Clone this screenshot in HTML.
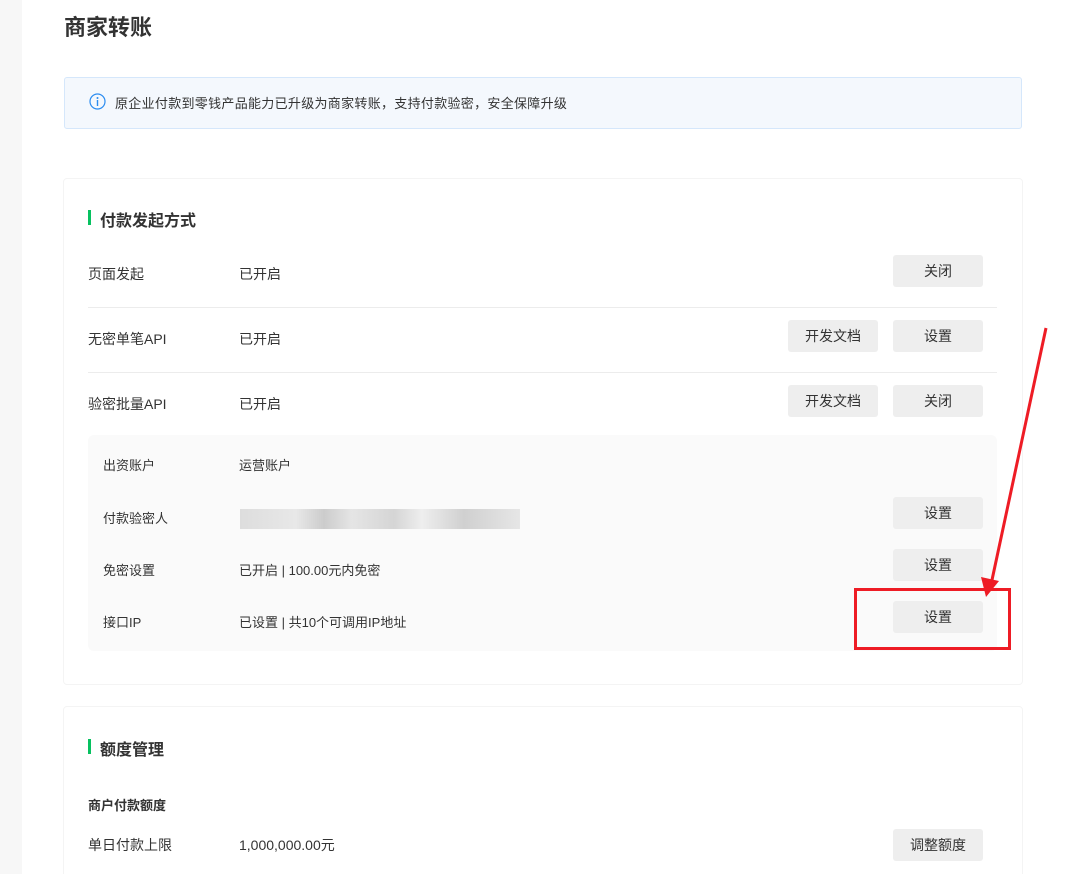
<!DOCTYPE html>
<html><head><meta charset="utf-8"><style>
*{margin:0;padding:0;box-sizing:border-box}
html,body{width:1091px;height:874px;overflow:hidden}
body{background:#fff;font-family:"Liberation Sans","Noto Sans CJK SC",sans-serif;color:#333;font-size:14px;position:relative}
.a{position:absolute;white-space:nowrap}
.strip{left:0;top:0;width:22px;height:874px;background:#f7f7f7}
.card{position:absolute;border:1px solid #f4f4f4;border-radius:4px;background:#fff}
.btn{position:absolute;width:90px;height:32px;background:#eeeeee;border-radius:3px;text-align:center;line-height:32px;font-size:14px;color:#333}
.line{position:absolute;left:88px;width:909px;height:1px;background:#ececec}
.bar{position:absolute;width:3px;height:15px;background:#07c160}
.h{font-size:16px;font-weight:bold;color:#333}
</style></head><body>
<div class="a strip"></div>
<div class="a" style="left:64px;top:10px;font-size:22px;font-weight:bold;color:#333">商家转账</div>
<div class="a" style="left:64px;top:77px;width:958px;height:52px;background:#f4f8fd;border:1px solid #d5e7fb;border-radius:3px"></div>
<svg class="a" style="left:89px;top:93px" width="17" height="17" viewBox="0 0 17 17"><circle cx="8.5" cy="8.5" r="7.5" fill="none" stroke="#2b8cf0" stroke-width="1.2"/><circle cx="8.5" cy="5" r="1" fill="#2b8cf0"/><rect x="7.8" y="7" width="1.4" height="6" fill="#2b8cf0"/></svg>
<div class="a" style="left:115px;top:93px;font-size:13px;letter-spacing:0.3px;color:#333">原企业付款到零钱产品能力已升级为商家转账，支持付款验密，安全保障升级</div>

<div class="card" style="left:63px;top:178px;width:960px;height:507px"></div>
<div class="bar" style="left:88px;top:210px"></div>
<div class="a h" style="left:100px;top:207px">付款发起方式</div>
<div class="a" style="left:88px;top:264px">页面发起</div><div class="a" style="left:239px;top:264px">已开启</div>
<div class="btn" style="left:893px;top:255px">关闭</div>
<div class="line" style="top:307px"></div>
<div class="a" style="left:88px;top:329px">无密单笔API</div><div class="a" style="left:239px;top:329px">已开启</div>
<div class="btn" style="left:788px;top:320px">开发文档</div><div class="btn" style="left:893px;top:320px">设置</div>
<div class="line" style="top:372px"></div>
<div class="a" style="left:88px;top:394px">验密批量API</div><div class="a" style="left:239px;top:394px">已开启</div>
<div class="btn" style="left:788px;top:385px">开发文档</div><div class="btn" style="left:893px;top:385px">关闭</div>
<div class="a" style="left:88px;top:435px;width:909px;height:216px;background:#fafafa;border-radius:6px"></div>
<div class="a" style="left:103px;top:455px;font-size:13px">出资账户</div><div class="a" style="left:239px;top:455px;font-size:13px">运营账户</div>
<div class="a" style="left:103px;top:508px;font-size:13px">付款验密人</div>
<div class="a" style="left:240px;top:509px;width:280px;height:20px;background:linear-gradient(90deg,#ddd,#e8e8e8 20%,#ccc 30%,#e5e5e5 40%,#d5d5d5 55%,#eee 65%,#d0d0d0 80%,#e6e6e6)"></div>
<div class="btn" style="left:893px;top:497px">设置</div>
<div class="a" style="left:103px;top:560px;font-size:13px">免密设置</div><div class="a" style="left:239px;top:560px;font-size:13px">已开启 | 100.00元内免密</div>
<div class="btn" style="left:893px;top:549px">设置</div>
<div class="a" style="left:103px;top:612px;font-size:13px">接口IP</div><div class="a" style="left:239px;top:612px;font-size:13px">已设置 | 共10个可调用IP地址</div>
<div class="btn" style="left:893px;top:601px">设置</div>

<div class="card" style="left:63px;top:706px;width:960px;height:200px"></div>
<div class="bar" style="left:88px;top:739px"></div>
<div class="a h" style="left:100px;top:736px">额度管理</div>
<div class="a" style="left:88px;top:795px;font-size:13px;font-weight:bold">商户付款额度</div>
<div class="a" style="left:88px;top:835px">单日付款上限</div><div class="a" style="left:239px;top:835px">1,000,000.00元</div>
<div class="btn" style="left:893px;top:829px">调整额度</div>

<div class="a" style="left:854px;top:588px;width:157px;height:62px;border:3px solid #ee1c25"></div>
<svg class="a" style="left:0;top:0" width="1091" height="874"><line x1="1046" y1="328" x2="992" y2="580" stroke="#ee1c25" stroke-width="3"/><polygon points="986,597 981,577 999,581" fill="#ee1c25"/></svg>
</body></html>
